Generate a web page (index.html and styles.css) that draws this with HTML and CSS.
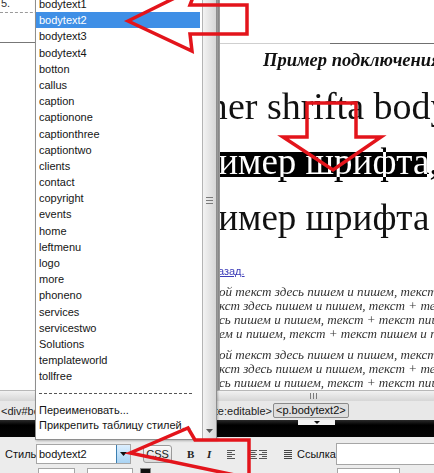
FILE: index.html
```html
<!DOCTYPE html>
<html lang="ru">
<head>
<meta charset="utf-8">
<title>Стили</title>
<link rel="stylesheet" href="styles.css">
</head>
<body>
<div class="app">
  <div class="panes">
    <div class="code-pane">
      <div class="cp-num">5.</div>
      <div class="cp-dash"></div>
      <div class="cp-line"></div>
    </div>
    <div class="divider"></div>
    <div class="design-pane">
      <div class="doc-rule"><span class="rule-dark"></span></div>
      <div class="doc-title">Пример подключения шрифтов</div>
      <div class="big big1">Primer shrifta bodytext1</div>
      <div class="big big2"><span class="sel">Пример шрифта,</span></div>
      <div class="big big3">Пример шрифта</div>
      <a class="back">Назад.</a>
      <div class="para para1">
        <div>ой текст здесь пишем и пишем, текст</div>
        <div>кст здесь пишем и пишем, текст + текст</div>
        <div>сь пишем и пишем, текст + текст пишем</div>
        <div>ем и пишем, текст + текст пишем и пишем</div>
      </div>
      <div class="para para2">
        <div>ой текст здесь пишем и пишем, текст</div>
        <div>кст здесь пишем и пишем, текст + текст</div>
        <div>сь пишем и пишем, текст + текст пишем</div>
      </div>
    </div>
  </div>
  <div class="hscroll"><span class="hgrip"></span></div>
  <div class="tagbar">
    <div class="tag-path">
      <span>&lt;div#bcontent&gt;</span>
      <span>&lt;mmtemplate:editable&gt;</span>
    </div>
    <span class="tag-current">&lt;p.bodytext2&gt;</span>
  </div>
  <div class="props-head"><span class="expander"></span></div>
  <div class="props">
    <div class="prow">
      <span class="p-lbl">Стиль</span>
      <div class="combo">
        <span class="combo-val">bodytext2</span>
        <span class="combo-btn"><svg width="7" height="4" viewBox="0 0 7 4"><path d="M0 0h7L3.5 4z" fill="#111"/></svg></span>
      </div>
      <span class="css-btn">CSS</span>
      <span class="fmt-b">B</span>
      <span class="fmt-i">I</span>
      <svg class="al al-l" width="8" height="9" viewBox="0 0 8 9"><path d="M0 .5h8M0 2.5h5M0 4.5h8M0 6.5h5M0 8.5h8" stroke="#555" stroke-width="1"/></svg>
      <svg class="al al-c" width="8" height="9" viewBox="0 0 8 9"><path d="M0 .5h8M1.5 2.5h5M0 4.5h8M1.5 6.5h5M0 8.5h8" stroke="#555" stroke-width="1"/></svg>
      <svg class="al al-r" width="8" height="9" viewBox="0 0 8 9"><path d="M0 .5h8M3 2.5h5M0 4.5h8M3 6.5h5M0 8.5h8" stroke="#555" stroke-width="1"/></svg>
      <svg class="al al-j" width="8" height="9" viewBox="0 0 8 9"><path d="M0 .5h8M0 2.5h8M0 4.5h8M0 6.5h8M0 8.5h8" stroke="#444" stroke-width="1"/></svg>
      <span class="p-lbl link-lbl">Ссылка</span>
      <span class="link-input"></span>
    </div>
    <div class="prow2">
      <span class="box box1"></span>
      <span class="box box2"></span>
      <span class="swatch"></span>
      <span class="box box3"></span>
    </div>
  </div>
</div>

<div class="dropdown">
  <ul class="dd-list">
    <li class="dd-item">bodytext1</li>
    <li class="dd-item is-selected">bodytext2</li>
    <li class="dd-item">bodytext3</li>
    <li class="dd-item">bodytext4</li>
    <li class="dd-item">botton</li>
    <li class="dd-item">callus</li>
    <li class="dd-item">caption</li>
    <li class="dd-item">captionone</li>
    <li class="dd-item">captionthree</li>
    <li class="dd-item">captiontwo</li>
    <li class="dd-item">clients</li>
    <li class="dd-item">contact</li>
    <li class="dd-item">copyright</li>
    <li class="dd-item">events</li>
    <li class="dd-item">home</li>
    <li class="dd-item">leftmenu</li>
    <li class="dd-item">logo</li>
    <li class="dd-item">more</li>
    <li class="dd-item">phoneno</li>
    <li class="dd-item">services</li>
    <li class="dd-item">servicestwo</li>
    <li class="dd-item">Solutions</li>
    <li class="dd-item">templateworld</li>
    <li class="dd-item">tollfree</li>
    <li class="dd-sep"></li>
    <li class="dd-cmd">Переименовать...</li>
    <li class="dd-cmd">Прикрепить таблицу стилей...</li>
  </ul>
  <div class="dd-scroll">
    <span class="dd-grip"></span>
    <svg class="dd-arrow" width="7" height="4" viewBox="0 0 7 4"><path d="M0 0h7L3.5 4z" fill="#555"/></svg>
  </div>
</div>

<svg class="annot" width="434" height="473" viewBox="0 0 434 473">
  <g fill="none" stroke="#e3141b" stroke-width="3.5" stroke-linejoin="miter">
    <polygon points="128,21 197,-13 190,5 247,5 247,34 190,34 192,51"/>
    <polygon points="307,103 356,103 356,137 381,137 333,170 283,137 307,137"/>
    <polygon points="130,453 188,428 195,440 249,440 249,478"/>
  </g>
</svg>
</body>
</html>
```

FILE: styles.css
```css
* { box-sizing: border-box; margin: 0; padding: 0; }
html, body { width: 434px; height: 473px; overflow: hidden; }
body {
  position: relative;
  background: #fff;
  font-family: "Liberation Sans", Arial, sans-serif;
  font-size: 11px;
  color: #111;
}

.app { display: flex; flex-direction: column; height: 473px; }
.app > * { flex-shrink: 0; }
.panes { display: flex; height: 390px; }

/* left pane */
.code-pane { width: 217px; background: #fff; overflow: hidden; }
.cp-num { height: 12px; line-height: 12px; margin-top: -3px; padding-left: 1px; color: #333; }
.cp-dash { margin-top: 3px; border-top: 1px dashed #9a9a9a; }
.cp-line { margin-top: 29px; height: 1px; background: #777; }

.divider { width: 3px; background: linear-gradient(to right, #c8c8c8, #8a8a8a 60%, #a8a8a8); }

/* design view */
.design-pane {
  flex: 1;
  background: #fff;
  overflow: hidden;
  isolation: isolate;
  font-family: "Liberation Serif", "Times New Roman", serif;
  color: #111;
}
.doc-rule { height: 1px; margin-top: 43px; background: #cfcfcf; display: flex; justify-content: flex-end; }
.rule-dark { width: 104px; background: #707070; }
.doc-title {
  margin-top: 6px; height: 20px; line-height: 20px;
  font-size: 18.5px; font-weight: bold; font-style: italic;
  white-space: nowrap; text-indent: 43px;
}
.big { height: 56px; line-height: 56px; font-size: 37px; white-space: nowrap; }
.big1 { margin-top: 8px; font-size: 38px; text-indent: -66px; }
.big2 {
  text-indent: -47px;
  background: linear-gradient(#000, #000) no-repeat 0 18px / 207px 25px;
}
.big2 .sel { color: #fff; mix-blend-mode: difference; }
.big3 { text-indent: -47px; }

.back {
  display: block; margin-top: 18px; height: 14px; line-height: 14px;
  font-family: "Liberation Sans", Arial, sans-serif; font-size: 11px;
  color: #3c3cb8; text-decoration: underline; text-indent: -10px; white-space: nowrap;
}
.para { font-style: italic; font-size: 13.1px; line-height: 13.7px; color: #333; white-space: nowrap; text-indent: -1px; }
.para1 { margin-top: 7.4px; }
.para2 { margin-top: 8.2px; }

/* horizontal scrollbar */
.hscroll {
  height: 11px; display: flex; align-items: center;
  background: linear-gradient(#f2f2f2, #d6d6d6);
  border-top: 1px solid #b8b8b8;
}
.hgrip {
  margin-left: 310px; width: 8px; height: 6px;
  background: repeating-linear-gradient(to right, #7a7a7a 0 1px, transparent 1px 3px);
}

/* tag selector */
.tagbar {
  height: 19px; display: flex; align-items: center;
  background: #e8e8e8; white-space: nowrap; color: #222;
}
.tag-path { width: 272px; padding-left: 1px; display: flex; justify-content: space-between; overflow: hidden; }
.tag-current {
  margin-left: 1px; padding: 0 2px; height: 15px; line-height: 13px;
  background: #dedede; border: 1px solid #8a8a8a; border-radius: 2px; color: #111;
}

/* properties header */
.props-head {
  height: 17px; display: flex;
  background: linear-gradient(#2a2a2a, #000 30%, #050505);
}
.expander {
  margin-left: 298px; width: 37px; height: 5px;
  background: #f4f4f4;
  position: relative;
}
.expander::after {
  content: ""; position: absolute; left: 16px; top: 1px;
  border-left: 3px solid transparent; border-right: 3px solid transparent; border-top: 3px solid #111;
}

/* properties panel */
.props { flex: 1 1 auto; min-height: 0; overflow: hidden; background: #ececec; padding-top: 6px; }
.prow { display: flex; align-items: center; height: 22px; }
.p-lbl { margin-left: 5px; width: 31px; color: #111; white-space: nowrap; }
.combo {
  width: 95px; height: 20px; display: flex; align-items: stretch;
  background: #fff; border: 1px solid #a6a6a6;
}
.combo-val { flex: 1; padding-left: 2px; line-height: 18px; color: #111; }
.combo-btn {
  width: 14px; display: flex; align-items: center; justify-content: center;
  background: linear-gradient(#dcefff, #a9d3f3); border-left: 1px solid #3c7fb1;
}
.css-btn {
  margin-left: 12px; width: 29px; height: 18px; line-height: 16px; text-align: center;
  border: 1px solid #9a9a9a; border-radius: 3px;
  background: linear-gradient(#fbfbfb, #dadada); color: #222;
}
.fmt-b { margin-left: 15px; width: 8px; font-family: "Liberation Serif", serif; font-weight: bold; font-size: 11px; color: #222; }
.fmt-i { margin-left: 12px; width: 7px; font-family: "Liberation Serif", serif; font-weight: bold; font-style: italic; font-size: 11px; color: #222; }
.al { display: block; }
.al-l { margin-left: 13px; }
.al-c { margin-left: 14px; }
.al-r { margin-left: 2px; }
.al-j { margin-left: 17px; }
.link-lbl { margin-left: 5px; width: 39px; }
.link-input { flex: 1; height: 22px; background: #fff; border: 1px solid #a6a6a6; border-right: 0; }

.prow2 { display: flex; margin-top: 3px; height: 12px; }
.box { height: 12px; background: #fff; border: 1px solid #a6a6a6; }
.box1 { margin-left: 38px; width: 37px; }
.box2 { margin-left: 12px; width: 46px; }
.swatch { margin-left: 7px; width: 11px; height: 12px; background: #111; border: 1px solid #888; }
.box3 { margin-left: 186px; width: 63px; }

/* style dropdown (overlay) */
.dropdown {
  position: absolute; left: 35px; top: -5px; width: 182px; height: 445px;
  display: flex; background: #fff; border: 1px solid #8e8e8e;
  box-shadow: 1px 1px 2px rgba(0,0,0,.25);
}
.dd-list { flex: 1; list-style: none; margin-right: 2px; }
.dd-item { height: 16.2px; line-height: 16.2px; padding-left: 3px; white-space: nowrap; color: #151515; }
.dd-item.is-selected { background: #3f8fe6; color: #fff; }
.dd-sep { height: 18px; padding-top: 8px; margin: 0 8px 0 3px; }
.dd-sep::before { content: ""; display: block; border-top: 1px dashed #555; }
.dd-cmd { height: 15px; line-height: 15px; padding-left: 3px; white-space: nowrap; color: #151515; }
.dd-scroll {
  width: 14px; display: flex; flex-direction: column; align-items: center;
  background: linear-gradient(to right, #f3f3f3, #d6d6d6);
  border-left: 1px solid #b4b4b4;
}
.dd-grip {
  margin-top: 201px; width: 7px; height: 7px;
  background: repeating-linear-gradient(#7a7a7a 0 1px, transparent 1px 3px);
}
.dd-arrow { margin-top: auto; margin-bottom: 6px; }

/* annotation arrows */
.annot { position: absolute; left: 0; top: 0; pointer-events: none; }
```
